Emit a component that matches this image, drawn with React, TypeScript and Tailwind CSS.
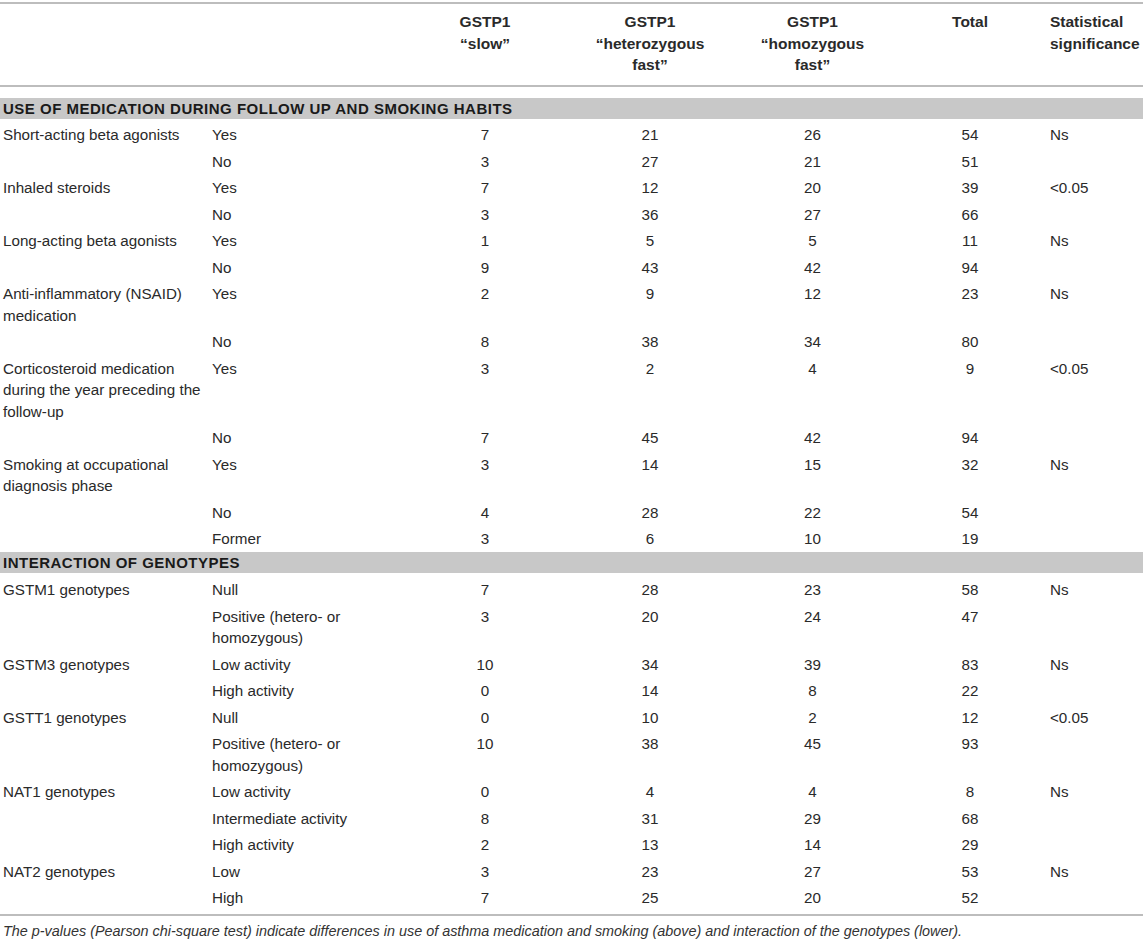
type Row = {
  label?: string[];
  level: string[];
  slow: number;
  het: number;
  hom: number;
  total: number;
  sig?: string;
};

type Section = { title: string; rows: Row[] };

const SECTIONS: Section[] = [
  {
    title: "USE OF MEDICATION DURING FOLLOW UP AND SMOKING HABITS",
    rows: [
      { label: ["Short-acting beta agonists"], level: ["Yes"], slow: 7, het: 21, hom: 26, total: 54, sig: "Ns" },
      { level: ["No"], slow: 3, het: 27, hom: 21, total: 51 },
      { label: ["Inhaled steroids"], level: ["Yes"], slow: 7, het: 12, hom: 20, total: 39, sig: "<0.05" },
      { level: ["No"], slow: 3, het: 36, hom: 27, total: 66 },
      { label: ["Long-acting beta agonists"], level: ["Yes"], slow: 1, het: 5, hom: 5, total: 11, sig: "Ns" },
      { level: ["No"], slow: 9, het: 43, hom: 42, total: 94 },
      { label: ["Anti-inflammatory (NSAID)", "medication"], level: ["Yes"], slow: 2, het: 9, hom: 12, total: 23, sig: "Ns" },
      { level: ["No"], slow: 8, het: 38, hom: 34, total: 80 },
      {
        label: ["Corticosteroid medication", "during the year preceding the", "follow-up"],
        level: ["Yes"],
        slow: 3,
        het: 2,
        hom: 4,
        total: 9,
        sig: "<0.05",
      },
      { level: ["No"], slow: 7, het: 45, hom: 42, total: 94 },
      { label: ["Smoking at occupational", "diagnosis phase"], level: ["Yes"], slow: 3, het: 14, hom: 15, total: 32, sig: "Ns" },
      { level: ["No"], slow: 4, het: 28, hom: 22, total: 54 },
      { level: ["Former"], slow: 3, het: 6, hom: 10, total: 19 },
    ],
  },
  {
    title: "INTERACTION OF GENOTYPES",
    rows: [
      { label: ["GSTM1 genotypes"], level: ["Null"], slow: 7, het: 28, hom: 23, total: 58, sig: "Ns" },
      { level: ["Positive (hetero- or", "homozygous)"], slow: 3, het: 20, hom: 24, total: 47 },
      { label: ["GSTM3 genotypes"], level: ["Low activity"], slow: 10, het: 34, hom: 39, total: 83, sig: "Ns" },
      { level: ["High activity"], slow: 0, het: 14, hom: 8, total: 22 },
      { label: ["GSTT1 genotypes"], level: ["Null"], slow: 0, het: 10, hom: 2, total: 12, sig: "<0.05" },
      { level: ["Positive (hetero- or", "homozygous)"], slow: 10, het: 38, hom: 45, total: 93 },
      { label: ["NAT1 genotypes"], level: ["Low activity"], slow: 0, het: 4, hom: 4, total: 8, sig: "Ns" },
      { level: ["Intermediate activity"], slow: 8, het: 31, hom: 29, total: 68 },
      { level: ["High activity"], slow: 2, het: 13, hom: 14, total: 29 },
      { label: ["NAT2 genotypes"], level: ["Low"], slow: 3, het: 23, hom: 27, total: 53, sig: "Ns" },
      { level: ["High"], slow: 7, het: 25, hom: 20, total: 52 },
    ],
  },
];

function Lines({ lines }: { lines?: string[] }) {
  if (!lines) return null;
  return (
    <>
      {lines.map((l, i) => (
        <span key={i} className="block whitespace-nowrap">
          {l}
        </span>
      ))}
    </>
  );
}

const td = "align-top py-[2.5px] leading-[21.5px]";
const th = "pt-[7px] pb-[9px] align-top";

export default function App() {
  return (
    <div className="min-h-[945px] w-[1143px] bg-white pt-[2px] font-['Liberation_Sans',Arial,sans-serif] text-[15.2px] text-[#2a2a2a]">
      <table className="w-full table-fixed border-collapse border-y-2 border-[#bdbdbd]">
        <colgroup>
          <col className="w-[207px]" />
          <col className="w-[193px]" />
          <col className="w-[170px]" />
          <col className="w-[160px]" />
          <col className="w-[165px]" />
          <col className="w-[150px]" />
          <col className="w-[98px]" />
        </colgroup>
        <thead>
          <tr className="border-b-2 border-[#bdbdbd] text-[15.5px] font-bold leading-[21.5px]">
            <th className={th} />
            <th className={th} />
            <th className={`${th} text-center`}>
              GSTP1
              <br />
              “slow”
            </th>
            <th className={`${th} text-center`}>
              GSTP1
              <br />
              “heterozygous
              <br />
              fast”
            </th>
            <th className={`${th} text-center`}>
              GSTP1
              <br />
              “homozygous
              <br />
              fast”
            </th>
            <th className={`${th} text-center`}>Total</th>
            <th className={`${th} pl-[5px] text-left whitespace-nowrap`}>
              Statistical
              <br />
              significance
            </th>
          </tr>
        </thead>
        {SECTIONS.map((sec, si) => (
          <tbody key={sec.title}>
            <tr>
              <td colSpan={7} className={si === 0 ? "pt-[11px] pb-[3.25px]" : "pb-[3.5px]"}>
                <div className="h-[21px] bg-[#c8c8c8] pl-[3px] text-[15px] font-bold leading-[21px] tracking-[0.5px] text-[#1a1a1a]">
                  {sec.title}
                </div>
              </td>
            </tr>
            {sec.rows.map((r, ri) => (
              <tr key={ri}>
                <td className={`${td} pl-[3px]`}>
                  <Lines lines={r.label} />
                </td>
                <td className={`${td} pl-[5px]`}>
                  <Lines lines={r.level} />
                </td>
                <td className={`${td} text-center`}>{r.slow}</td>
                <td className={`${td} text-center`}>{r.het}</td>
                <td className={`${td} text-center`}>{r.hom}</td>
                <td className={`${td} text-center`}>{r.total}</td>
                <td className={`${td} pl-[5px]`}>{r.sig}</td>
              </tr>
            ))}
            {si === SECTIONS.length - 1 ? (
              <tr>
                <td colSpan={7} className="h-[3.5px] p-0" />
              </tr>
            ) : null}
          </tbody>
        ))}
      </table>
      <p className="mt-[6px] pl-[3px] text-[14.4px] italic leading-[18px] text-[#333]">
        The p-values (Pearson chi-square test) indicate differences in use of asthma medication and smoking (above) and
        interaction of the genotypes (lower).
      </p>
    </div>
  );
}
